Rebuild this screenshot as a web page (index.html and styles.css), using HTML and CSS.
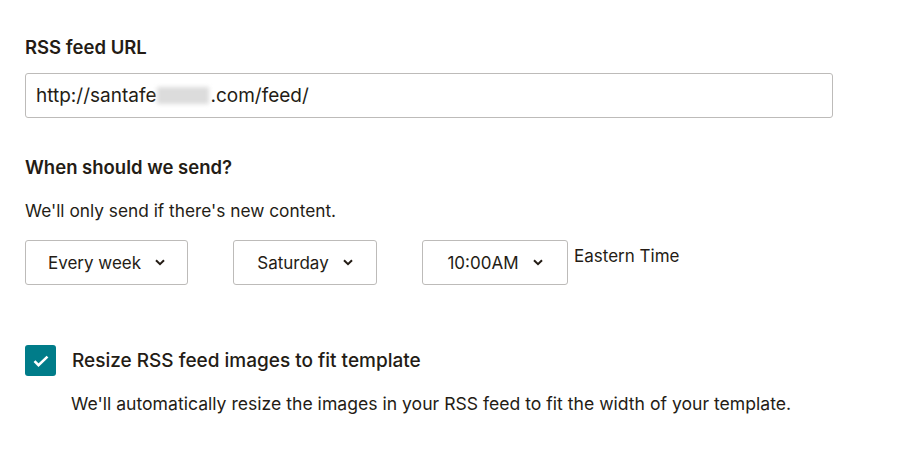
FILE: index.html
```html
<!DOCTYPE html>
<html>
<head>
<meta charset="utf-8">
<link rel="stylesheet" href="styles.css">
</head>
<body>
<div class="page">
  <section class="field">
    <label class="heading">RSS feed URL</label>
    <div class="input"><span>http://santafe</span><span class="blur"></span><span>.com/feed/</span></div>
  </section>
  <section class="field when">
    <h2 class="heading">When should we send?</h2>
    <p class="help">We'll only send if there's new content.</p>
    <div class="selects">
      <div class="select s1">Every week <svg class="chev" viewBox="0 0 10 7" width="10" height="7"><path d="M1 1.2l4 4 4-4" fill="none" stroke="#241c15" stroke-width="2"/></svg></div>
      <div class="select s2">Saturday <svg class="chev" viewBox="0 0 10 7" width="10" height="7"><path d="M1 1.2l4 4 4-4" fill="none" stroke="#241c15" stroke-width="2"/></svg></div>
      <div class="select s3">10:00AM <svg class="chev" viewBox="0 0 10 7" width="10" height="7"><path d="M1 1.2l4 4 4-4" fill="none" stroke="#241c15" stroke-width="2"/></svg></div>
      <span class="tz">Eastern Time</span>
    </div>
  </section>
  <section class="check">
    <div class="row">
      <span class="box"><svg viewBox="0 0 16 12" width="16" height="12"><path d="M1.5 6.2l4 4 9-8.6" fill="none" stroke="#fff" stroke-width="2.6"/></svg></span>
      <span class="label">Resize RSS feed images to fit template</span>
    </div>
    <p class="desc">We'll automatically resize the images in your RSS feed to fit the width of your template.</p>
  </section>
</div>
</body>
</html>
```
FILE: styles.css
```css
html, body { margin: 0; padding: 0; background: #fff; }
body { font-family: "Inter", "Liberation Sans", sans-serif; color: #241c15; }
.page { padding: 36px 0 0 25px; }
.heading { display: block; margin: 0; font-size: 18.5px; font-weight: 600; line-height: 23px; }
.input {
  margin-top: 14px; height: 43px; border: 1px solid #bdbbb9; border-radius: 3px;
  display: flex; align-items: center; padding-left: 10px; box-sizing: content-box;
  font-size: 19px; width: 796px;
}
.blur { display: inline-block; width: 52px; height: 17px; background: #dcdcdc; filter: blur(2px); margin: 0 1px; }
.when { margin-top: 38px; }
.help { margin: 20px 0 0; font-size: 17.3px; line-height: 23px; }
.selects { display: flex; align-items: flex-start; gap: 45px; margin-top: 18px; }
.select {
  height: 43px; border: 1px solid #bdbbb9; border-radius: 3px; display: flex; align-items: center;
  justify-content: center; gap: 14px; font-size: 17px; box-sizing: content-box;
}
.s1 { width: 161px; }
.s2 { width: 142px; }
.s3 { width: 144px; }
.tz { margin-left: -39px; margin-top: 6px; font-size: 17px; }
.check { margin-top: 60px; }
.row { display: flex; align-items: center; gap: 16px; }
.box { width: 31px; height: 31px; background: #007c89; border-radius: 3px; display: flex; align-items: center; justify-content: center; }
.label { font-size: 19px; font-weight: 500; }
.desc { margin: 17px 0 0 46px; font-size: 17.6px; }
```
